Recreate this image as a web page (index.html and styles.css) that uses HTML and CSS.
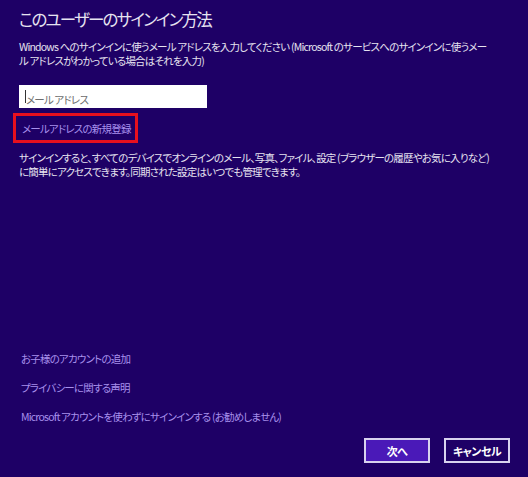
FILE: index.html
```html
<!DOCTYPE html>
<html lang="ja">
  <head>
    <meta charset="UTF-8" />
    <meta name="viewport" content="width=device-width, initial-scale=1.0" />
    <title>このユーザーのサインイン方法</title>
    <link rel="stylesheet" href="styles.css">
  </head>
  <body>
    <div class="dialog">
      <h1 class="title">このユーザーのサインイン方法</h1>
      <p class="lead">Windows へのサインインに使うメール アドレスを入力してください (Microsoft のサービスへのサインインに使うメール アドレスがわかっている場合はそれを入力)</p>

      <div class="email">
        <span class="caret"></span>
        <input type="text" placeholder="メール アドレス" />
      </div>
      <a href="#" class="signup">メールアドレスの新規登録</a>

      <p class="note">サインインすると、すべてのデバイスでオンラインのメール、写真、ファイル、設定 (ブラウザーの履歴やお気に入りなど) に簡単にアクセスできます。同期された設定はいつでも管理できます。</p>

      <ul class="links">
        <li><a href="#">お子様のアカウントの追加</a></li>
        <li><a href="#">プライバシーに関する声明</a></li>
        <li><a href="#">Microsoft アカウントを使わずにサインインする (お勧めしません)</a></li>
      </ul>

      <div class="actions">
        <button class="btn primary">次へ</button>
        <button class="btn">キャンセル</button>
      </div>
    </div>
  </body>
</html>
```

FILE: styles.css
```css
body {
  margin: 0;
  background-color: #1e0066;
  color: #e6e3f0;
  font-family: "Noto Sans CJK JP", "Noto Sans", sans-serif;
  font-feature-settings: "palt";
}
.dialog {
  height: 477px;
  box-sizing: border-box;
  padding: 4px 19px 14px;

  display: flex;
  flex-direction: column;
}
.title {
  margin: 0;
  font-size: 16.5px;
  font-weight: normal;
  line-height: 30px;
  letter-spacing: -1.8px;
}
.lead,
.note {
  margin: 0;
  font-size: 10.5px;
  line-height: 14px;
  letter-spacing: -0.8px;
  width: 470px;
}
.lead {
  margin-top: 6px;
}

/* メール入力欄 */
.email {
  position: relative;
  width: 188px;
  height: 23px;
  margin-top: 17px;
  background-color: #fff;
}
.email input {
  width: 100%;
  height: 100%;
  box-sizing: border-box;
  border: none;
  outline: none;
  padding: 0 0 0 7px;
  font-family: inherit;
  font-feature-settings: "palt";
  font-size: 10.5px;
  letter-spacing: -0.8px;
  background-color: transparent;
}
.email input::placeholder {
  color: #6d6d6d;
}
.caret {
  position: absolute;
  left: 6px;
  top: 5px;
  width: 1px;
  height: 13px;
  background-color: #333;
}

.signup {
  align-self: flex-start;
  margin: 5px 0 0 -6px;
  width: 125px;
  height: 30px;
  box-sizing: border-box;
  border: 3px solid #e8101e;
  padding-left: 6px;

  display: flex;
  align-items: center;
  white-space: nowrap;
  font-size: 10.5px;
  letter-spacing: -0.8px;
  color: #a890ec;
  text-decoration: none;
}
.note {
  margin-top: 8px;
}

/* 下部のリンク */
.links {
  list-style: none;
  margin: auto 0 0;
  padding: 0 0 0 2px;
  display: flex;
  flex-direction: column;
  gap: 15px;
}
.links li {
  font-size: 10.5px;
  line-height: 14px;
  letter-spacing: -0.8px;
}
.links a {
  color: #a890ec;
  text-decoration: none;
}

.actions {
  margin-top: 14px;
  margin-right: -1px;
  display: flex;
  justify-content: flex-end;
  gap: 14px;
}
.btn {
  width: 66px;
  height: 25px;
  padding: 0;
  white-space: nowrap;
  border: 2px solid #d8d2ee;
  background-color: #1e0066;
  color: #fff;
  font-family: inherit;
  font-feature-settings: "palt";
  font-size: 11px;
  letter-spacing: -0.5px;
  font-weight: bold;
}
.btn.primary {
  background-color: #4a19b8;
}
```
